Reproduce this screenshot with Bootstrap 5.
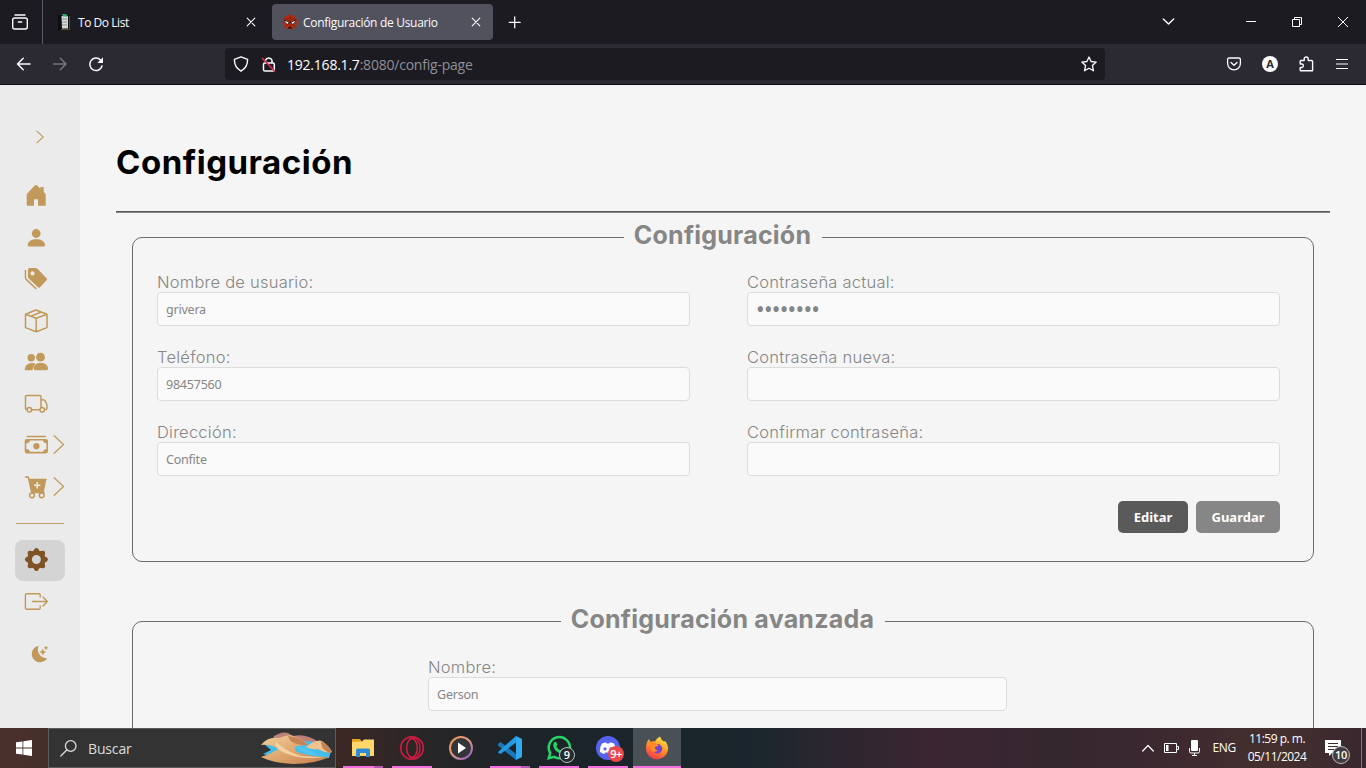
<!DOCTYPE html>
<html lang="es">
<head>
<meta charset="utf-8">
<meta name="viewport" content="width=device-width, initial-scale=1">
<title>Configuración de Usuario</title>
<link href="https://cdn.jsdelivr.net/npm/bootstrap@5.3.0/dist/css/bootstrap.min.css" rel="stylesheet">
<script src="https://cdn.jsdelivr.net/npm/bootstrap@5.3.0/dist/js/bootstrap.bundle.min.js" defer></script>
<style>
body{width:1366px;height:768px;overflow:hidden;font-family:"Open Sans","Noto Sans",sans-serif;font-size:12px;line-height:1.3;background:#f5f5f5}
svg{display:block;flex:none;overflow:visible}
.ln{fill:none;stroke:currentColor;stroke-linecap:round;stroke-linejoin:round}
.tabstrip{height:44px;background:#1c1b22;color:#fbfbfe}
.view-btn{width:43px;height:44px;padding-right:2px;border-right:1px solid #5b5a63}
.tab-item{height:36px;border-radius:4px;letter-spacing:-.3px;line-height:34px}
.tab-item span{padding-top:2px}
.tab-a{width:221px;margin:4px;padding-left:11px}
.tab-a span{margin-left:4px;letter-spacing:-.45px}
.tab-b{width:221px;background:#52525e;padding-left:10px}
.tab-b span{margin-left:5px}
.tab-x{margin-left:auto;margin-right:12px}
.tab-plus{margin-left:16px}
.win-icons{gap:36px;padding-right:18px}
.all-tabs{margin-right:35px}
.toolbar-row{height:41px;background:#2b2a33;color:#fbfbfe;border-bottom:1px solid #0c0c0d}
.nav-icons{gap:21px;padding-left:17px}
.nav-off{color:#76757d}
.ext-icons{gap:21px;padding-right:18px}
.urlbar{width:880px;height:32px;background:#1c1b22;border-radius:4px;margin-left:121px;padding:0 8px}
.lock-icon{margin-left:12px;margin-right:11px}
.url-text{font-size:14px;letter-spacing:-.22px;padding-top:2px}
.dim{color:#8f8f96}
.page-area{height:643px;overflow:hidden;color:#868686}
.sidebar{width:80px;background:#ebebeb;color:#c19a5b;flex:none}
.side-row{height:41.5px;padding-left:24px}
.side-top{height:90.25px;padding-top:45px;padding-left:34px}
.sub-arrow{margin-left:5px}
.side-line{width:48px;height:1px;background:#bf9f68;margin:15.75px 0 16px 16px}
.gear-row{width:50px;height:41px;margin-left:15px;padding:0 0 1px 9px;background:#d4d4d4;border-radius:8px;color:#7f5326}
.moon-row{padding:22.5px 0 0 31px}
.main-col{padding:0 36px;font-family:Inter,"Open Sans",sans-serif}
.page-title{font-size:33px;font-weight:700;color:#000;letter-spacing:.52px;line-height:40px;padding-top:57px;margin:0 0 29px}
.title-line{height:2px;background:linear-gradient(#5a5a5a 50%,#858585 50%)}
.fs{border:1px solid #6b6b6b;border-radius:10px;padding:0 33px 0 24px;margin:0 16px}
.fs-first{margin-top:9px;height:340px}
.fs-next{margin-top:44px;height:300px}
.fs legend{float:none;width:198px;height:31px;margin:0 0 0 4px;padding:0;text-align:center;white-space:nowrap;font-size:25px;font-weight:700;line-height:27px;letter-spacing:.23px;color:#868686}
.fs .legend-wide{width:324px}
.grid-two{display:grid;grid-template-columns:533px 533px;column-gap:57px;row-gap:20px;padding-top:18px}
.fld label{display:block;height:21px;line-height:23px;font-size:16.5px;font-weight:350;letter-spacing:.24px;white-space:nowrap}
.fld .form-control{height:34px;padding:0 8px;background:#fafafa;border:1px solid #dcdcdc;border-radius:4px;color:#868686;font:12.5px "Noto Sans",sans-serif;letter-spacing:-.22px}
.fld .form-control[type=password]{font-size:23px;letter-spacing:-.75px}
.single{width:579px;margin:19px auto 0 271px}
.form-btns{padding-top:25px}
.btn-x{height:32px;border:0;border-radius:5px;padding:0;color:#fff;font:700 13px "Noto Sans",sans-serif}
.b-edit{width:70px;background:#5a5a5a}
.b-save{width:84px;background:#868686}
.taskbar{height:40px;background:linear-gradient(90deg,#4a302c 0,#452f2b 48px,#3b2825 340px,#222528 460px,#1b2429 560px,#1a262d 750px,#2a262f 820px,#3a2530 930px,#35272f 1060px,#3b2830 1150px,#45302e 1280px,#38272f 1366px);color:#fff}
.start{width:48px}
.search{width:288px;height:40px;background:#333;border:1px solid #5c5c5c;color:#dcdcdc;font-size:14px;padding-left:11px;gap:11px}
.search span{padding-top:2px;letter-spacing:-.15px}
.dunes{margin-left:auto;margin-right:3px}
.apps{margin-left:3px}
.app{width:49px;height:40px;position:relative;padding-right:2px}
.app.run::after{content:"";position:absolute;left:4px;right:5px;bottom:0;height:2px;background:#f56ee0}
.app.two::after{background:linear-gradient(90deg,#f56ee0 31px,#b45ab0 31px)}
.app.active{width:48px;padding:0;background:#4a5156}
.app.active::after{left:0;right:0}
.cnt{position:absolute;width:16px;height:16px;left:24px;top:19px;border-radius:50%;background:#252b2f;border:1px solid #b6bbbf;font-size:11px;font-weight:600;line-height:14px;text-align:center}
.cnt-red{background:#e8494d;border:0;line-height:15px;letter-spacing:-.5px;top:18px}
.cnt-note{width:18px;height:18px;left:14px;top:18px;line-height:16px;background:#443c40;letter-spacing:-.4px}
.tray{gap:10px}
.clock{width:62px;font-size:12px;line-height:18px;text-align:center;white-space:nowrap;letter-spacing:-.5px}
.eng{letter-spacing:-.3px;margin-left:2px}
.note{width:44px;height:40px;border-right:1px solid #83777c;margin-right:4px}
.note svg{margin:12px 0 0 7px}
</style>
</head>
<body>
<div class="d-flex flex-column">
<header>
<div class="tabstrip d-flex align-items-center">
  <div class="view-btn d-flex align-items-center justify-content-center">
    <svg width="16" height="16" viewBox="0 0 16 16" class="ln" stroke-width="1.4"><path d="M3 1H13M2.7 4H13.3Q15.3 4 15.3 6V13Q15.3 15 13.3 15H2.7Q.7 15 .7 13V6Q.7 4 2.7 4M6.3 8H9.700"/></svg>
  </div>
  <div class="tab-item tab-a d-flex align-items-center">
    <svg width="16" height="16" viewBox="0 0 16 16"><path d="M0 1H12V16H0Z" fill="#0c0d0c"/><path d="M3.500 2H10V14.500H4Z" fill="#d4dad9"/><path d="M4 5H9M4 8H9M4 11H9" stroke="#8b918f"/><path d="M4 0H8L10 2.500H5Z" fill="#27a764"/><path d="M11.500 2V15.500H3" stroke="#604d31" fill="none"/></svg>
    <span>To Do List</span>
    <svg class="tab-x" width="10" height="10" viewBox="0 0 10 10"><path class="ln" stroke-width="1.1" d="M1.200 1.200L8.800 8.800M8.800 1.200L1.200 8.800"/></svg>
  </div>
  <div class="tab-item tab-b d-flex align-items-center">
    <svg width="16" height="16" viewBox="0 0 16 16"><circle cx="8" cy="8" r="7.300" fill="#b32c14"/><path d="M3 3L13 13M13 3L3 13M1.500 6Q8 2 14.500 6M8 1V15" stroke="#7c2010" stroke-width=".7" fill="none"/><path d="M2.500 6L7.200 8.500L5.500 10.300Q2.800 9.800 2.500 6M13.500 6L8.800 8.500L10.500 10.300Q13.200 9.800 13.500 6" fill="#fff" stroke="#181010" stroke-width=".8"/><path d="M5.500 14.500Q8 10.500 10.500 14.500" fill="#241010"/></svg>
    <span>Configuración de Usuario</span>
    <svg class="tab-x" width="10" height="10" viewBox="0 0 10 10"><path class="ln" stroke-width="1.1" d="M1.200 1.200L8.800 8.800M8.800 1.200L1.200 8.800"/></svg>
  </div>
  <svg class="tab-plus" width="12" height="12" viewBox="0 0 12 12"><path class="ln" stroke-width="1.3" d="M5.700 .8V11.800M.2 6.300H11.200"/></svg>
  <div class="win-icons ms-auto d-flex align-items-center">
    <svg class="all-tabs" width="12" height="8" viewBox="0 0 12 8"><path class="ln" stroke-width="1.4" d="M0.300 1L5.500 6L10.700 1"/></svg>
    <svg width="10" height="10" viewBox="0 0 10 10"><path d="M0 4.500H10" stroke="#fff"/></svg>
    <svg width="10" height="10" viewBox="0 0 10 10"><path d="M.5 2.500H7.500V9.500H.5ZM2.500 2.500V.5H9.500V7.500H7.500" fill="none" stroke="#fff"/></svg>
    <svg width="10" height="10" viewBox="0 0 10 10"><path d="M0 0L10 10M10 0L0 10" stroke="#fff"/></svg>
  </div>
</div>
<div class="toolbar-row d-flex align-items-center">
  <div class="nav-icons d-flex align-items-center">
  <svg width="15" height="14" viewBox="0 0 15 14"><path class="ln" stroke-width="1.500" d="M13 7H.5M6.200 1.300L.5 7L6.200 12.700"/></svg>
  <svg class="nav-off" width="15" height="14" viewBox="0 0 15 14"><path class="ln" stroke-width="1.500" d="M.5 7H13M7.300 1.300L13 7L7.300 12.700"/></svg>
  <svg width="15" height="15" viewBox="0 0 15 15"><path class="ln" stroke-width="1.500" d="M13 9A6.200 6.200 0 1 1 11.500 3L13 4.500"/><path fill="currentColor" d="M14 .3V6H8.400Z"/></svg>
  </div>
  <div class="urlbar d-flex align-items-center">
    <svg width="16" height="16" viewBox="0 0 16 16"><path class="ln" stroke-width="1.400" d="M8 .8L14.600 3.300Q14.800 11.400 8 15.200Q1.200 11.400 1.400 3.300Z"/></svg>
    <svg class="lock-icon" width="15" height="16" viewBox="0 0 15 16"><path class="ln" stroke-width="1.500" d="M4.500 7V4.300A3.500 3.500 0 0 1 11 4.300V7M4 7H12Q13.300 7 13.300 8.300V13.700Q13.300 15 12 15H4Q2.500 15 2.500 13.700V8.300Q2.500 7 4 7"/><path d="M1 2L14 15.500" stroke="#e22850" stroke-width="1.600"/></svg>
    <span class="url-text dim"><span class="text-white">192.168.1.7</span>:8080/config-page</span>
    <svg class="ms-auto" width="16" height="16" viewBox="0 0 16 16"><path class="ln" stroke-width="1.300" d="M8 1L10.100 5.500L15.200 6.100L11.400 9.500L12.500 14.800L8 12.200L3.500 14.800L4.600 9.500L.8 6.100L5.900 5.500Z"/></svg>
  </div>
  <div class="ext-icons ms-auto d-flex align-items-center">
    <svg width="14" height="14" viewBox="0 0 14 14"><path class="ln" stroke-width="1.300" d="M2 1H12Q13.400 1 13.400 2.400V6.500A6.400 6.400 0 0 1 .6 6.500V2.400Q.6 1 2 1M4 5.500L7 8.300L10 5.500"/></svg>
    <svg width="16" height="16" viewBox="0 0 16 16"><circle cx="8" cy="8" r="8" fill="#fbfbfe"/><text x="8" y="12" text-anchor="middle" font-size="11" font-weight="700" fill="#2b2a33">A</text></svg>
    <svg width="16" height="16" viewBox="0 0 16 16"><path class="ln" stroke-width="1.400" d="M2 4.500H5.200V3A2 2 0 0 1 9.200 3V4.500H12.500Q13.600 4.500 13.600 5.500V14.800H2Q1.200 14.800 1.200 14V11.500H3A1.800 1.800 0 0 0 3 8H1.200V5.500Q1.200 4.500 2 4.500"/></svg>
    <svg width="12" height="12" viewBox="0 0 12 12"><path d="M0 1.500H12M0 6H12M0 10.500H12" stroke="currentColor" stroke-width="1.200"/></svg>
  </div>
</div>
</header>

<div class="page-area d-flex">
  <nav class="sidebar d-flex flex-column">
    <div class="side-top"><svg width="12" height="14" viewBox="0 0 12 14"><path fill="none" stroke="currentColor" stroke-width="1.100" d="M2.500 .8L9.300 7L2.500 13.200"/></svg></div>
    <div class="side-row d-flex align-items-center"><svg width="24" height="24" fill="currentColor"><path d="M12 1Q12.600 1 13.200 1.600L16.300 4.700V3.500Q16.300 3 16.800 3H19.200Q19.700 3 19.700 3.500V8L21.200 9.600Q21.700 10.200 21.700 11V21Q21.700 21.700 21 21.700H14V16Q14 15.200 13.200 15.200H10.800Q10 15.200 10 16V21.700H3.400Q2.700 21.700 2.700 21V11Q2.700 10.200 3.200 9.600L10.800 1.600Q11.400 1 12 1"/></svg></div>
    <div class="side-row d-flex align-items-center"><svg width="24" height="24" fill="currentColor"><circle cx="12.200" cy="7.500" r="4.400"/><path d="M3.700 19C3.700 15 8 13.200 12.300 13.200S21 15 21 19Q21 20.500 19.500 20.500H5.200Q3.700 20.500 3.700 19"/></svg></div>
    <div class="side-row d-flex align-items-center"><svg width="24" height="24" fill="currentColor"><path fill-rule="evenodd" d="M5.500 1H11.500Q12.700 1 13.500 1.800L22.600 11.200Q23.600 12.300 22.600 13.300L16 20.300Q15 21.300 14 20.300L4.700 11.500Q4 10.800 4 10V2.500Q4 1 5.500 1M8.500 4.300A2 2 0 1 0 8.500 8.500A2 2 0 1 0 8.500 4.300"/><path d="M1.500 3V10.700Q1.500 11.700 2.200 12.400L12.300 22" fill="none" stroke="currentColor" stroke-width="1.500"/></svg></div>
    <div class="side-row d-flex align-items-center"><svg width="24" height="24" class="ln" stroke-width="1.500"><path d="M12 1L23 5.200V18.600L12.200 22.700L1.500 18.600V5.200ZM1.500 5.200L12.200 9.300L23 5.200M12.200 9.300V22.700M6.800 7.200L17.500 3"/></svg></div>
    <div class="side-row d-flex align-items-center"><svg width="24" height="24" fill="currentColor"><circle cx="7.200" cy="7.800" r="3.700"/><circle cx="16.500" cy="7.200" r="4.400"/><path d="M.8 20.200C.8 15.200 4 13 8.500 13Q10.500 13 11.500 13.700Q8.800 15.800 8.500 20.200Z"/><path d="M9.600 18.500C9.600 15 12.500 13 16.700 13S24 15 24 18.500Q24 20.200 22.500 20.200H11.100Q9.600 20.200 9.600 18.500"/></svg></div>
    <div class="side-row d-flex align-items-center"><svg width="24" height="24" class="ln" stroke-width="1.500"><path d="M3 17.700H2.700Q1.500 17.700 1.500 16.500V4.800Q1.500 3.600 2.700 3.600H15.800Q17 3.600 17 4.800V15.300M8 17.700H15.500M17 7.800H19Q20.500 7.800 21.200 9L22.700 12.300Q23 13 23 13.800V16.300Q23 17.700 21.500 17.700"/><circle cx="5.300" cy="17.700" r="2.300"/><circle cx="18.200" cy="17.700" r="2.300"/></svg></div>
    <div class="side-row d-flex align-items-center"><svg width="24" height="24"><path class="ln" stroke-width="1.500" d="M3.200 3.500H21.500"/><path class="ln" stroke-width="1.600" d="M2.500 6.800H22Q23.200 6.800 23.200 8V18Q23.200 19.600 22 19.600H2.500Q1.500 19.600 1.500 18V8Q1.500 6.800 2.500 6.800"/><circle cx="12.400" cy="13.200" r="3.100" fill="currentColor"/><path fill="currentColor" d="M2 7H6Q6 10 2 10.500ZM23 7H19Q19 10 23 10.500ZM2 19.500H6Q6 16 2 16ZM23 19.500H19Q19 16 23 16Z"/></svg><svg class="sub-arrow" width="12" height="20"><path class="ln" stroke-width="1.200" d="M1.200 .7L10.500 9.500L1.200 18.300"/></svg></div>
    <div class="side-row d-flex align-items-center"><svg width="24" height="24"><path class="ln" stroke-width="1.400" d="M1.500 2H4.300L7.700 17.500H20M4.800 4.500H22"/><path fill="currentColor" d="M4.800 4H22.400L19.800 17.500H7.700Z"/><path stroke="#ebebeb" stroke-width="1.500" d="M13.200 7V13.400M10 10.200H16.400"/><circle class="ln" stroke-width="1.500" cx="8" cy="20.300" r="2.400"/><circle class="ln" stroke-width="1.500" cx="17.700" cy="20.300" r="2.400"/></svg><svg class="sub-arrow" width="12" height="20"><path class="ln" stroke-width="1.200" d="M1.200 .7L10.500 9.500L1.200 18.300"/></svg></div>
    <div class="side-line"></div>
    <div class="gear-row d-flex align-items-center"><svg width="24" height="24" viewBox="-12.400 -11.500 24 24"><g fill="currentColor"><path id="tooth" d="M-4.300 -6.500L-1.900 -10.400Q0 -12.800 1.900 -10.400L4.300 -6.500Z"/><use href="#tooth" transform="rotate(45)"/><use href="#tooth" transform="rotate(90)"/><use href="#tooth" transform="rotate(135)"/><use href="#tooth" transform="rotate(180)"/><use href="#tooth" transform="rotate(225)"/><use href="#tooth" transform="rotate(270)"/><use href="#tooth" transform="rotate(315)"/></g><circle r="6.800" fill="none" stroke="currentColor" stroke-width="4.600"/></svg></div>
    <div class="side-row d-flex align-items-center"><svg width="24" height="24" class="ln" stroke-width="1.400"><path d="M16.200 7V5Q16.200 3.800 15 3.800H2.600Q1.400 3.800 1.400 5V18Q1.400 19.200 2.600 19.200H15Q16.200 19.200 16.200 18V16M8.500 11.500H23M19 7L23.300 11.500L19 16"/></svg></div>
    <div class="moon-row"><svg width="18" height="18" fill="currentColor"><path d="M7.500 .8A9 9 0 0 0 16.200 13.200A8.300 8.300 0 1 1 7.500 .8"/><path d="M11.800 4.300L12.700 6.200L14.800 7L12.700 7.900L11.800 10L10.900 7.900L8.900 7L10.900 6.200ZM15 1L15.500 2.200L16.800 2.800L15.500 3.400L15 4.600L14.400 3.400L13.200 2.800L14.400 2.200Z" stroke="currentColor" stroke-width=".5"/></svg></div>
  </nav>
  <main class="main-col flex-grow-1">
    <h1 class="page-title">Configuración</h1>
    <div class="title-line"></div>
    <fieldset class="fs fs-first">
      <legend>Configuración</legend>
      <div class="grid-two">
        <div class="fld"><label>Nombre de usuario:</label><input class="form-control" value="grivera"></div>
        <div class="fld"><label>Contraseña actual:</label><input type="password" class="form-control" value="12345678"></div>
        <div class="fld"><label>Teléfono:</label><input class="form-control" value="98457560"></div>
        <div class="fld"><label>Contraseña nueva:</label><input type="password" class="form-control"></div>
        <div class="fld"><label>Dirección:</label><input class="form-control" value="Confite"></div>
        <div class="fld"><label>Confirmar contraseña:</label><input type="password" class="form-control"></div>
      </div>
      <div class="form-btns d-flex justify-content-end gap-2">
        <button class="btn btn-x b-edit">Editar</button><button class="btn btn-x b-save">Guardar</button>
      </div>
    </fieldset>
    <fieldset class="fs fs-next">
      <legend class="legend-wide">Configuración avanzada</legend>
      <div class="fld single"><label>Nombre:</label><input class="form-control" value="Gerson"></div>
    </fieldset>
  </main>
</div>

<footer class="taskbar d-flex align-items-center">
  <div class="start d-flex justify-content-center"><svg width="16" height="16" fill="#fff"><path d="M0 2.300L6.500 1.400V7.600H0ZM7.300 1.300L16 0V7.600H7.300ZM0 8.400H6.500V14.600L0 13.700ZM7.300 8.400H16V16L7.300 14.700Z"/></svg></div>
  <div class="search d-flex align-items-center">
    <svg width="17" height="17"><g class="ln" stroke-width="1.300"><circle cx="10.700" cy="6" r="5.300"/><path d="M6.800 10L.8 16"/></g></svg>
    <span>Buscar</span>
    <svg class="dunes" width="71" height="32" viewBox="0 0 71 32">
      <defs><linearGradient id="sand" x1="0" y1="0" x2="1" y2="1"><stop offset="0" stop-color="#f2cf9d"/><stop offset=".55" stop-color="#dca36b"/><stop offset="1" stop-color="#c57b4b"/></linearGradient></defs>
      <path fill="#43bdea" d="M3 12L18 2L38 5L55 9L70 19L68 26L50 28L20 26L2 22L10 18Z"/>
      <path fill="#bd8177" d="M12 5Q20 -1 27 1L32 4Q40 2 48 5Q54 7 57 10L40 9L18 8Z"/>
      <path fill="url(#sand)" d="M0 13Q7 4 18 6Q29 1 35 5Q42 7 47 13L36 14Q32 16 36 20Q50 25 68 25Q54 32 32 32Q12 31 0 25Q9 22 18 17Q9 12 0 13"/>
      <path fill="#efc38d" d="M45 15Q55 7 61 9Q69 15 71 20Q66 22 57 17Q50 18 45 15"/>
      <path fill="#f4d2a1" d="M15 10Q24 19 40 24Q53 25 64 25Q41 28 27 22Q12 17 15 10"/>
      <path fill="#c68355" d="M27 4Q29 12 41 13L47 13Q40 5 27 4M60 9Q59 16 68 21L71 20Q67 12 60 9"/>
      <path fill="#4fc5ef" d="M33 14Q48 14 57 24Q42 23 33 14"/>
    </svg>
  </div>
  <div class="apps d-flex">
    <div class="app run two d-flex align-items-center justify-content-center"><svg width="22" height="20"><path fill="#e5a51d" d="M0 1H8L10 4H0Z"/><path fill="#ffd76b" d="M0 4L10 3.500L12 1.500H22V18H0Z"/><path fill="#2e8cd6" d="M4 19V12Q4 10.500 5.500 10.500H16.500Q18 10.500 18 12V19H14V15H8V19Z"/></svg></div>
    <div class="app run d-flex align-items-center justify-content-center"><svg width="24" height="24" fill="none" stroke="#d71b42"><circle cx="12" cy="12" r="11.300" stroke-width="1.500"/><ellipse cx="12" cy="12" rx="5.300" ry="9.300" stroke-width="1.500"/><path d="M9 3.500C15 -.5 20 5 20 12S15 24.500 9 20.500" stroke-width="1.300"/></svg></div>
    <div class="app d-flex align-items-center justify-content-center"><svg width="24" height="24"><defs><linearGradient id="ring" x1="0" y1="0" x2="1" y2="1"><stop offset="0" stop-color="#f3944c"/><stop offset=".5" stop-color="#dd9b8a"/><stop offset="1" stop-color="#8757cf"/></linearGradient></defs><circle cx="12" cy="12" r="11" fill="#333638" stroke="url(#ring)" stroke-width="2"/><path fill="#fff" d="M9 6.500L17 12L9 17.500Z"/></svg></div>
    <div class="app run two d-flex align-items-center justify-content-center"><svg width="24" height="24"><path fill="#1c78bd" d="M0 8L2.500 6L18 18V24L0 9.500Z"/><path fill="#239be4" d="M0 16L18 0V6.500L2.500 18L0 16.500Z"/><path fill="#31a9ef" d="M18 0L24 3V21L18 24Z"/></svg></div>
    <div class="app run d-flex align-items-center justify-content-center"><svg width="24" height="24"><path fill="none" stroke="#25d366" stroke-width="2.500" d="M1.700 22.300L3.200 17A10.600 10.600 0 1 1 7.200 20.900Z"/><path fill="#25d366" d="M7.200 6.200Q8.800 5 9.500 6.700L10.300 8.600Q10.400 9.500 9.300 10.400Q10.700 13.200 13.600 14.200L15 12.600L18 14Q18 17.500 14.700 17.800Q8 16.500 6.300 10Q6 7.500 7.200 6.200"/></svg><span class="cnt">9</span></div>
    <div class="app run d-flex align-items-center justify-content-center"><svg width="24" height="24"><circle cx="12" cy="12" r="12" fill="#5663ee"/><path fill="#fff" d="M6 7.500L10 6.300L10.600 7.500H13.400L14 6.300L18 7.500Q20.500 11 20.200 15.700Q18 17.700 15.600 17.900L14.700 16.500H9.300L8.400 17.900Q6 17.700 3.800 15.700Q3.500 11 6 7.500"/><circle cx="9" cy="12.800" r="1.600" fill="#5663ee"/><circle cx="15" cy="12.800" r="1.600" fill="#5663ee"/></svg><span class="cnt cnt-red">9+</span></div>
    <div class="app run active d-flex align-items-center justify-content-center"><svg width="24" height="24"><defs><linearGradient id="fox" x1=".8" y1="0" x2=".3" y2="1"><stop offset="0" stop-color="#fff04b"/><stop offset=".45" stop-color="#ff9b24"/><stop offset="1" stop-color="#f8334f"/></linearGradient></defs><path fill="url(#fox)" d="M2 6L4 3L5.500 6Q7.500 5 10 5.500Q12 2 15 .5Q16 4 19 5.500L20 5Q23.500 9 23 14A11.200 11.200 0 0 1 .8 13Q.8 9 2 6"/><circle cx="12.500" cy="12.800" r="4.700" fill="#7542d5"/><path fill="#ff8b27" d="M5 7Q9 5 12 8.200L14 9Q12 11 9.800 11Q10 14 13 14.500Q8 18 5.500 13Z"/></svg></div>
  </div>
  <div class="tray ms-auto d-flex align-items-center">
    <svg width="12" height="8"><path class="ln" stroke-width="1.200" d="M.7 7L6 1.500L11.300 7"/></svg>
    <svg width="15" height="10"><path fill="none" stroke="#fff" d="M.5 .5H12.500V9.500H.5ZM12.500 3.500H14.500V6.500H12.500"/><path fill="#fff" d="M2 2H4.500V8H2Z"/></svg>
    <svg width="11" height="16"><rect x="2" width="7" height="11" rx="1" fill="#fff"/><path fill="none" stroke="#fff" d="M.5 8V11.500Q.5 13 2 13H9Q10.500 13 10.500 11.500V8M5.500 13V15.500M3 15.500H8"/></svg>
    <span class="eng">ENG</span>
    <div class="clock">11:59 p. m.<br>05/11/2024</div>
    <div class="note position-relative"><svg width="16" height="16"><path fill="#fff" d="M0 0H16V13H7L4 16V13H0Z"/><path stroke="#3e2c32" d="M3 3.500H13M3 6.500H13M3 9.500H9"/></svg><span class="cnt cnt-note">10</span></div>
  </div>
</footer>
</div>
</body>
</html>
